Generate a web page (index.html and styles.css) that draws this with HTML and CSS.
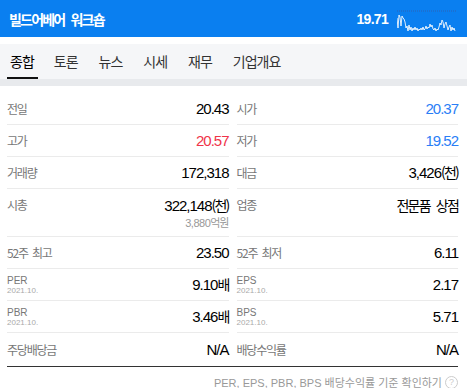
FILE: index.html
```html
<!DOCTYPE html>
<html lang="ko">
<head>
    <meta charset="UTF-8">
    <meta name="viewport" content="width=device-width, initial-scale=1.0">
    <title>빌드어베어 워크숍</title>
    <link rel="stylesheet" href="styles.css">
</head>
<body>
    <header class="top">
        <h1 class="name">빌드어베어 워크숍</h1>
        <div class="quote">
            <span class="price">19.71</span>
            <svg class="spark" width="60" height="28" viewBox="0 0 60 28">
                <line x1="0" y1="5" x2="60" y2="5" stroke="#2d62b4" stroke-dasharray="1 1"/>
                <polyline fill="none" stroke="rgba(255,255,255,0.85)" stroke-width="1"
                    points="0,12 1,22 2,9 3,11 4,20 5,10 6,12 7,13 8,16 9,22 10,20 11,25 12,19 13,24 14,21 15,25 16,22 17,24 18,21 19,24 20,22 21,25 22,23 23,24 24,22 25,24 26,21 27,24 28,23 29,20 30,23 31,21 32,22 33,18 34,21 35,19 36,23 37,24 38,22 39,25 40,23 41,24 42,21 43,17 44,19 45,14 46,16 47,22 48,18 49,16 50,20 51,24 52,21 53,19 54,25 55,21 56,24 57,22 58,25"/>
            </svg>
        </div>
    </header>

    <nav class="tabs">
        <a class="tab on">종합</a>
        <a class="tab">토론</a>
        <a class="tab">뉴스</a>
        <a class="tab">시세</a>
        <a class="tab">재무</a>
        <a class="tab">기업개요</a>
    </nav>

    <div class="grid">
        <div class="cell"><span class="label">전일</span><span class="val">20.43</span></div>
        <div class="cell"><span class="label">시가</span><span class="val up-blue">20.37</span></div>

        <div class="cell"><span class="label">고가</span><span class="val red">20.57</span></div>
        <div class="cell"><span class="label">저가</span><span class="val up-blue">19.52</span></div>

        <div class="cell"><span class="label">거래량</span><span class="val">172,318</span></div>
        <div class="cell"><span class="label">대금</span><span class="val">3,426<span class="ko">(천)</span></span></div>

        <div class="cell tall">
            <span class="label">시총</span>
            <div class="val-box">
                <span class="val">322,148<span class="ko">(천)</span></span>
                <span class="sub">3,880<span class="ko">억원</span></span>
            </div>
        </div>
        <div class="cell tall"><span class="label">업종</span><span class="val"><span class="ko">전문품 상점</span></span></div>

        <div class="cell"><span class="label">52주 최고</span><span class="val">23.50</span></div>
        <div class="cell"><span class="label">52주 최저</span><span class="val">6.11</span></div>

        <div class="cell">
            <div class="label-box"><span class="label-en">PER</span><span class="date">2021.10.</span></div>
            <span class="val">9.10<span class="ko">배</span></span>
        </div>
        <div class="cell">
            <div class="label-box"><span class="label-en">EPS</span><span class="date">2021.10.</span></div>
            <span class="val">2.17</span>
        </div>

        <div class="cell">
            <div class="label-box"><span class="label-en">PBR</span><span class="date">2021.10.</span></div>
            <span class="val">3.46<span class="ko">배</span></span>
        </div>
        <div class="cell">
            <div class="label-box"><span class="label-en">BPS</span><span class="date">2021.10.</span></div>
            <span class="val">5.71</span>
        </div>

        <div class="cell last"><span class="label">주당배당금</span><span class="val">N/A</span></div>
        <div class="cell last"><span class="label">배당수익률</span><span class="val">N/A</span></div>
    </div>

    <p class="note">PER, EPS, PBR, BPS 배당수익률 기준 확인하기 <span class="help">?</span></p>
</body>
</html>
```

FILE: styles.css
```css
body {
    margin: 0;
    background-color: #fff;
    font-family: "Liberation Sans", "Noto Sans CJK KR", sans-serif;
    color: #111;
}

.top {
    display: flex;
    align-items: center;
    justify-content: space-between;
    height: 37px;
    padding: 0 10px 0 9px;
    background-color: #0a7ff0;
    color: #fff;
}

.name {
    margin: 0;
    font-family: "Noto Sans CJK KR", sans-serif;
    font-size: 14px;
    font-weight: bold;
    letter-spacing: -1.8px;
    word-spacing: 4px;
}

.quote {
    display: flex;
    align-items: center;
    gap: 9px;
}

.price {
    font-size: 14px;
    font-weight: bold;
    letter-spacing: -0.7px;
}

.spark {
    display: block;
    margin-top: 2px;
}

.tabs {
    display: flex;
    gap: 13px;
    height: 35px;
    margin-top: 7px;
    padding: 0 7px;
    background-color: #f5f6f8;
    border-bottom: 7px solid #e8eaed;
    font-family: "Noto Sans CJK KR", sans-serif;
    font-size: 14px;
    letter-spacing: -1px;
}

.tab {
    display: flex;
    align-items: center;
    padding: 0 4px 0 3px;
    color: #333;
    border-bottom: 2px solid transparent;
    box-sizing: border-box;
    cursor: pointer;
}

.tab:nth-child(n+3) {
    margin-left: 1px;
}

.tab.on {
    color: #000;
    border-bottom-color: #111;
}

.grid {
    display: grid;
    grid-template-columns: 1fr 1fr;
    column-gap: 8px;
    margin: 0 9px 0 7px;
    padding-top: 7px;
    border-bottom: 1px solid #333;
}

.cell {
    display: flex;
    align-items: center;
    justify-content: space-between;
    min-height: 31px;
    border-bottom: 1px solid #ebebeb;
}

.cell.tall {
    align-items: flex-start;
    padding: 7px 0 6px;
    min-height: 0;
}

.cell.last {
    border-bottom: none;
    min-height: 33px;
}

.label {
    font-family: "Noto Sans CJK KR", sans-serif;
    font-size: 12px;
    letter-spacing: -1.2px;
    word-spacing: 2px;
    line-height: 18px;
    color: #777;
}

.label-box {
    display: flex;
    flex-direction: column;
    padding-top: 1px;
}

.label-en {
    font-size: 10px;
    line-height: 11px;
    color: #777;
}

.date {
    font-size: 8px;
    line-height: 9px;
    color: #aaa;
}

.val {
    font-size: 15px;
    line-height: 18px;
    letter-spacing: -1px;
    color: #000;
}

.ko {
    font-family: "Noto Sans CJK KR", sans-serif;
    font-size: 14px;
    letter-spacing: -1.8px;
    word-spacing: 4px;
}

.val-box {
    display: flex;
    flex-direction: column;
    align-items: flex-end;
}

.sub {
    margin-top: 1px;
    font-size: 11px;
    line-height: 13px;
    letter-spacing: -0.5px;
    color: #999;
}

.sub .ko {
    font-size: 11px;
    line-height: 13px;
    letter-spacing: -1px;
}

.red {
    color: #f0344a;
}

.up-blue {
    color: #2a7ef6;
}

.note {
    display: flex;
    align-items: center;
    justify-content: flex-end;
    gap: 3px;
    margin: 0;
    padding: 7px 9px 0 0;
    font-size: 11px;
    color: #999;
}

.help {
    display: inline-flex;
    align-items: center;
    justify-content: center;
    width: 11px;
    height: 11px;
    border: 1px solid #ccc;
    border-radius: 50%;
    font-size: 9px;
    color: #ccc;
}
```
